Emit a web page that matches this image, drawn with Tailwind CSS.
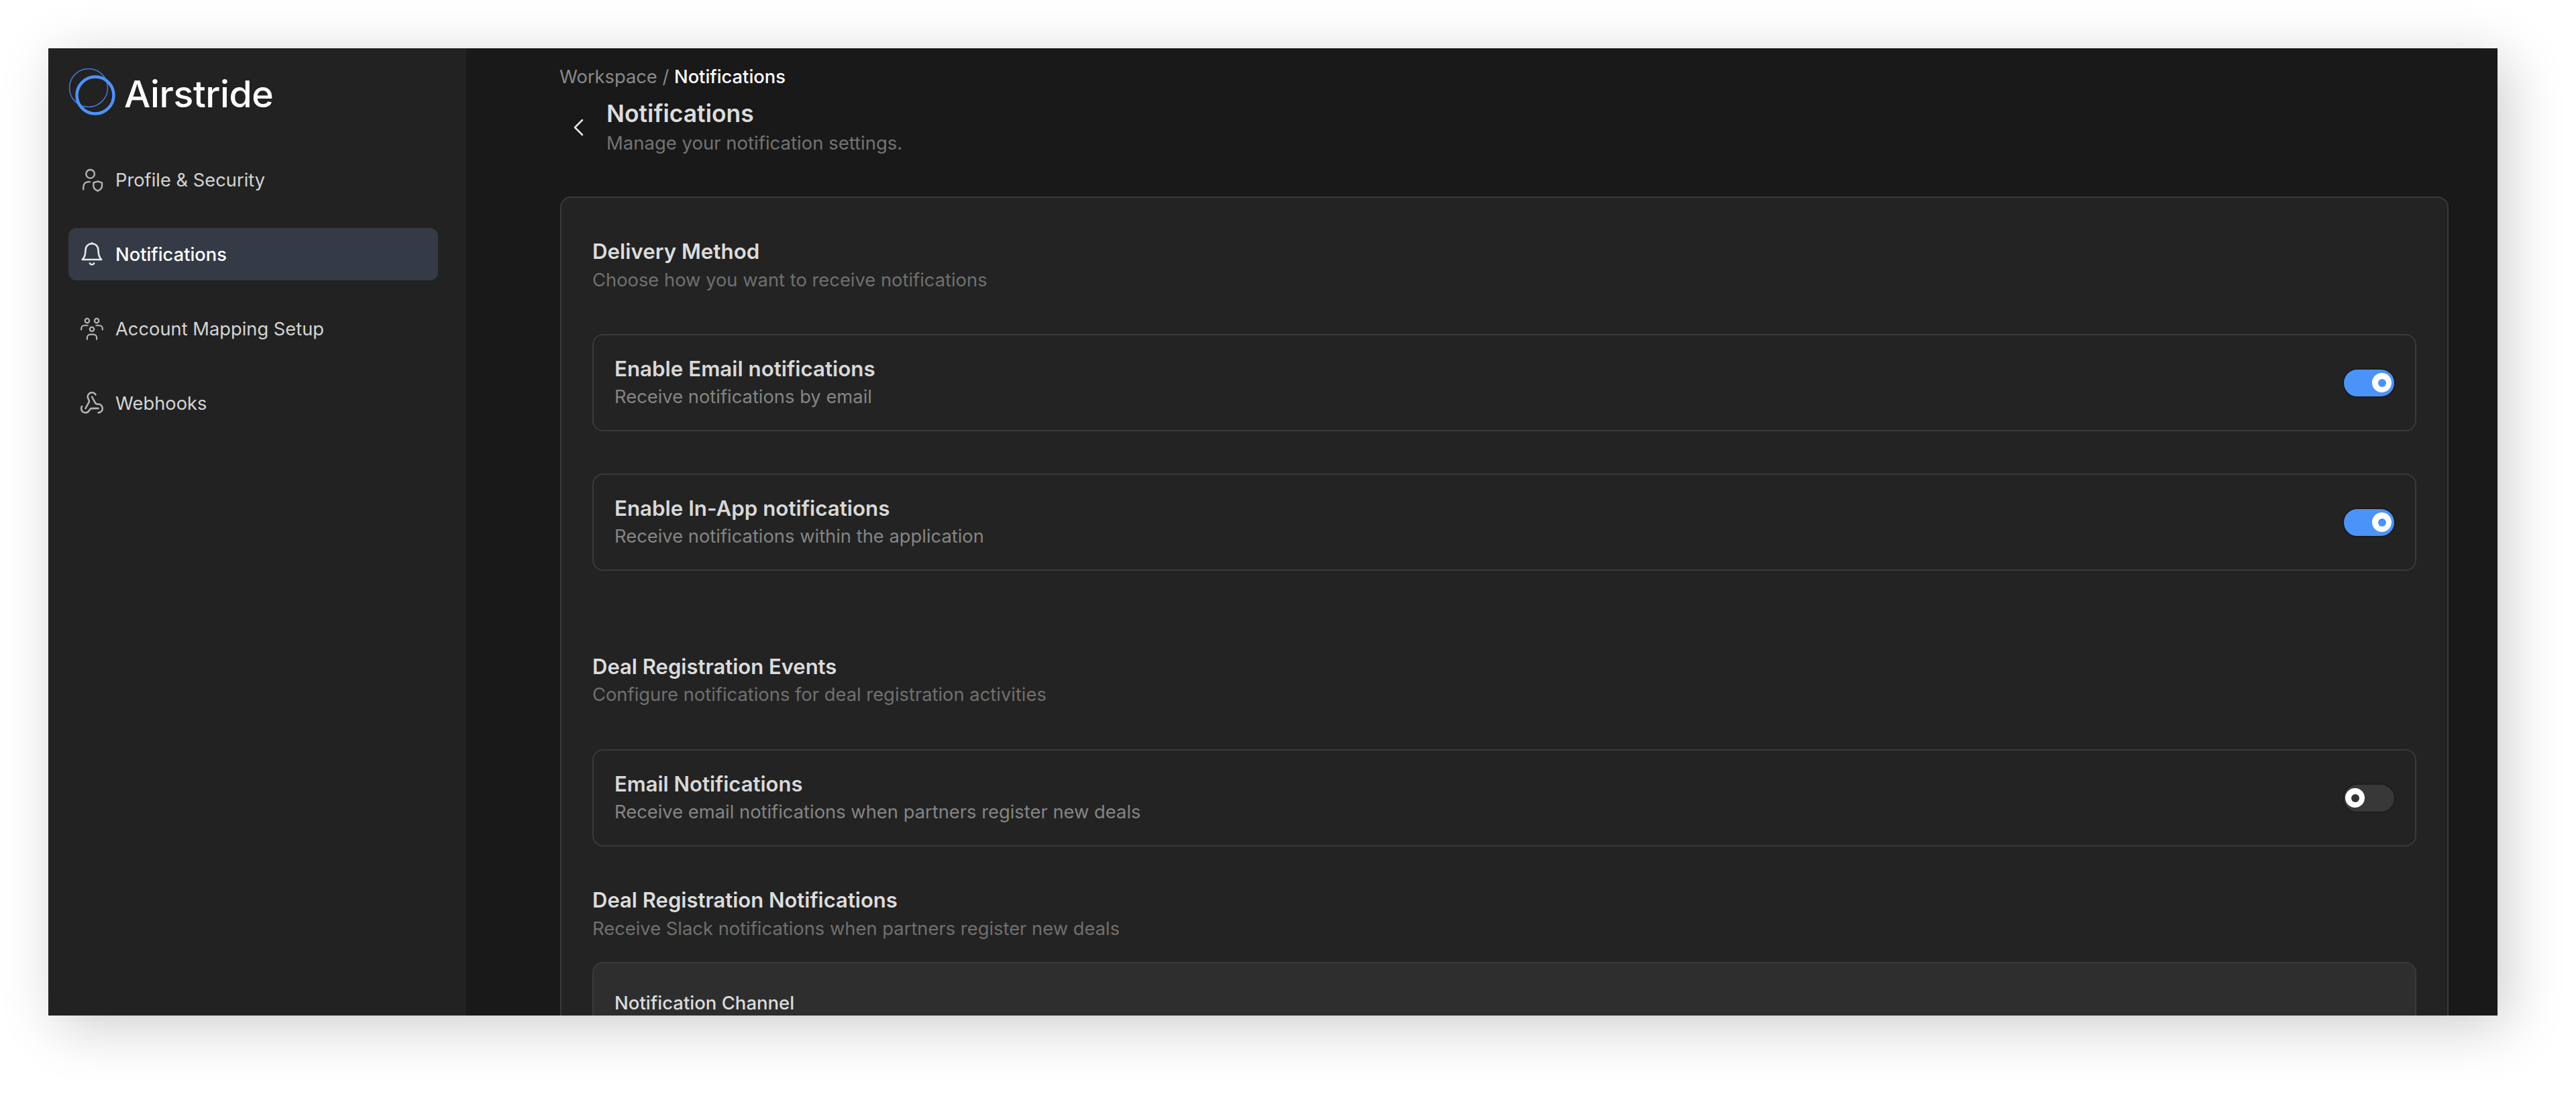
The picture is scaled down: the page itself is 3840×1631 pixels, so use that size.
<!DOCTYPE html>
<html lang="en">
<head>
<meta charset="utf-8">
<title>Notifications</title>
<script src="https://cdn.jsdelivr.net/npm/@tailwindcss/browser@4"></script>
</head>
<body class="bg-white font-['Inter',sans-serif] overflow-hidden">
<div class="w-[3840px] h-[1631px] pt-[72px] pl-[72px]">
  <div class="w-[3651px] h-[1442px] flex overflow-hidden bg-[#191919] shadow-[14px_16px_80px_rgba(0,0,0,0.2)]">
    <aside class="w-[623px] shrink-0 bg-[#222222] pl-[30px] pr-[42px] pt-[30px]">
      <div class="flex items-center h-[70px]">
        <svg class="w-[70px] h-[70px] shrink-0" viewBox="0 0 70 70" fill="none">
          <circle cx="30" cy="29" r="28.5" stroke="#3f7fd6" stroke-width="1.5"/>
          <circle cx="40" cy="40" r="27.5" stroke="#4b93f7" stroke-width="4.5"/>
        </svg>
        <span class="ml-[13px] mt-[5px] text-[55.500px] leading-none font-medium text-white tracking-[-0.5px]">Airstride</span>
      </div>
      <nav class="mt-[57px] flex flex-col gap-[33px]">
        <a class="h-[78px] rounded-[12px] flex items-center pl-[16px] text-[27.300px] text-[#d4d4d4]">
          <svg class="w-[38px] h-[38px] shrink-0" viewBox="0 0 24 24" fill="none" stroke="#b5b5b5" stroke-width="1.5" stroke-linecap="round" stroke-linejoin="round"><circle cx="10.500" cy="6.500" r="4"/><path d="M4 21v-2.500a4.500 4.500 0 0 1 4.500-4.500h1.500"/><path d="M17.500 13.500l4 1.300v3c0 2.300-1.700 3.700-4 4.700-2.300-1-4-2.400-4-4.700v-3z"/></svg>
          <span class="ml-[16px] mt-[3px]">Profile &amp; Security</span>
        </a>
        <a class="h-[78px] rounded-[12px] bg-[#343a46] flex items-center pl-[16px] text-[27.300px] font-medium text-white">
          <svg class="w-[38px] h-[38px] shrink-0" viewBox="0 0 24 24" fill="none" stroke="#e8e8e8" stroke-width="1.600" stroke-linecap="round" stroke-linejoin="round"><path d="M6 8a6 6 0 0 1 12 0c0 7 3 9 3 9H3s3-2 3-9"/><path d="M10 20.500a2.200 2.200 0 0 0 4 0"/><path d="M12 2v-.5"/></svg>
          <span class="ml-[16px] mt-[3px]">Notifications</span>
        </a>
        <a class="h-[78px] rounded-[12px] flex items-center pl-[16px] text-[27.300px] text-[#d4d4d4]">
          <svg class="w-[38px] h-[38px] shrink-0" viewBox="0 0 24 24" fill="none" stroke="#b5b5b5" stroke-width="1.400" stroke-linecap="round" stroke-linejoin="round"><circle cx="7.500" cy="4.500" r="2"/><circle cx="16.500" cy="4.500" r="2"/><circle cx="12" cy="12.500" r="2"/><path d="M2 13v-1a3 3 0 0 1 3-3h3"/><path d="M22 13v-1a3 3 0 0 0-3-3h-3"/><path d="M7.500 22v-1.500a3 3 0 0 1 3-3h3a3 3 0 0 1 3 3V22"/></svg>
          <span class="ml-[16px] mt-[3px]">Account Mapping Setup</span>
        </a>
        <a class="h-[78px] rounded-[12px] flex items-center pl-[16px] text-[27.300px] text-[#d4d4d4]">
          <svg class="w-[38px] h-[38px] shrink-0" viewBox="0 0 24 24" fill="none" stroke="#b5b5b5" stroke-width="1.600" stroke-linecap="round" stroke-linejoin="round"><path d="M18 16.980h-5.990c-1.100 0-1.950.940-2.480 1.900A4 4 0 0 1 2 17c.010-.700.200-1.400.570-2"/><path d="m6 17 3.130-5.780c.530-.970.100-2.180-.500-3.100a4 4 0 1 1 6.890-4.060"/><path d="m12 6 3.130 5.730C15.660 12.700 16.900 13 18 13a4 4 0 0 1 0 8"/></svg>
          <span class="ml-[16px] mt-[3px]">Webhooks</span>
        </a>
      </nav>
    </aside>
    <main class="flex-1 min-w-0 pl-[140px] pr-[73px] pt-[25px]">
      <div class="h-[36px] -ml-[1px] flex items-center text-[27.300px] leading-[36px] text-[#8a8a8a]">Workspace&nbsp;/&nbsp;<span class="font-medium text-white">Notifications</span></div>
      <header class="flex items-center mt-[15px]">
        <svg class="ml-[17px] w-[22px] h-[30px] shrink-0" viewBox="0 0 22 30" fill="none" stroke="#e8e8e8" stroke-width="2.500" stroke-linecap="round" stroke-linejoin="round"><path d="M16 4 5 15l11 11"/></svg>
        <div class="ml-[30px]">
          <h1 class="text-[35.500px] leading-[40px] font-semibold text-[#dcdcdc] translate-y-[2px]">Notifications</h1>
          <p class="mt-[7px] text-[27.500px] leading-[36px] text-[#737373]">Manage your notification settings.</p>
        </div>
      </header>
      <section class="mt-[62px] border-2 border-[#3a3a3a] rounded-[16px] bg-[#232323] pl-[46px] pr-[46px] pt-[60px] pb-[60px]">
        <h2 class="text-[31.300px] leading-[40px] font-semibold text-[#dcdcdc]">Delivery Method</h2>
        <p class="mt-[5px] text-[27.350px] leading-[36px] text-[#707070]">Choose how you want to receive notifications</p>

        <div class="mt-[62px] h-[145px] border-2 border-[#3a3a3a] rounded-[16px] flex items-center justify-between pl-[31px] pr-[29px]">
          <div>
            <h3 class="text-[31.300px] leading-[36px] font-semibold text-[#d8d8d8]">Enable Email notifications</h3>
            <p class="mt-[6px] text-[27.350px] leading-[36px] text-[#858585]">Receive notifications by email</p>
          </div>
          <div class="w-[79px] h-[44px] rounded-full border-2 border-[#1a1a1a] bg-[#4b93f9] flex items-center justify-end pr-[4px]">
            <div class="w-[29px] h-[29px] rounded-full bg-white flex items-center justify-center"><div class="w-[12px] h-[12px] rounded-full bg-[#4b93f9]"></div></div>
          </div>
        </div>

        <div class="mt-[63px] h-[145px] border-2 border-[#3a3a3a] rounded-[16px] flex items-center justify-between pl-[31px] pr-[29px]">
          <div>
            <h3 class="text-[31.300px] leading-[36px] font-semibold text-[#d8d8d8]">Enable In-App notifications</h3>
            <p class="mt-[6px] text-[27.350px] leading-[36px] text-[#858585]">Receive notifications within the application</p>
          </div>
          <div class="w-[79px] h-[44px] rounded-full border-2 border-[#1a1a1a] bg-[#4b93f9] flex items-center justify-end pr-[4px]">
            <div class="w-[29px] h-[29px] rounded-full bg-white flex items-center justify-center"><div class="w-[12px] h-[12px] rounded-full bg-[#4b93f9]"></div></div>
          </div>
        </div>

        <h2 class="mt-[123px] text-[31px] leading-[40px] font-semibold text-[#dcdcdc]">Deal Registration Events</h2>
        <p class="mt-[4px] text-[27.350px] leading-[36px] text-[#707070]">Configure notifications for deal registration activities</p>

        <div class="mt-[63px] h-[145px] border-2 border-[#3a3a3a] rounded-[16px] flex items-center justify-between pl-[31px] pr-[29px]">
          <div>
            <h3 class="text-[31px] leading-[36px] font-semibold text-[#d8d8d8]">Email Notifications</h3>
            <p class="mt-[6px] text-[27.350px] leading-[36px] text-[#858585]">Receive email notifications when partners register new deals</p>
          </div>
          <div class="w-[79px] h-[44px] rounded-full border-2 border-[#1d1d1d] bg-[#383838] flex items-center justify-start pl-[2px]">
            <div class="w-[29px] h-[29px] rounded-full bg-white flex items-center justify-center"><div class="w-[12px] h-[12px] rounded-full bg-[#333333]"></div></div>
          </div>
        </div>

        <h2 class="mt-[60px] text-[31px] leading-[40px] font-semibold text-[#dcdcdc]">Deal Registration Notifications</h2>
        <p class="mt-[5px] text-[27.350px] leading-[36px] text-[#707070]">Receive Slack notifications when partners register new deals</p>

        <div class="mt-[31px] h-[300px] border-2 border-[#3a3a3a] rounded-[16px] bg-[#2e2e2e] pl-[31px] pr-[31px] pt-[41px]">
          <h3 class="text-[27.500px] leading-[36px] font-medium text-[#dcdcdc]">Notification Channel</h3>
        </div>
      </section>
    </main>
  </div>
</div>
</body>
</html>
